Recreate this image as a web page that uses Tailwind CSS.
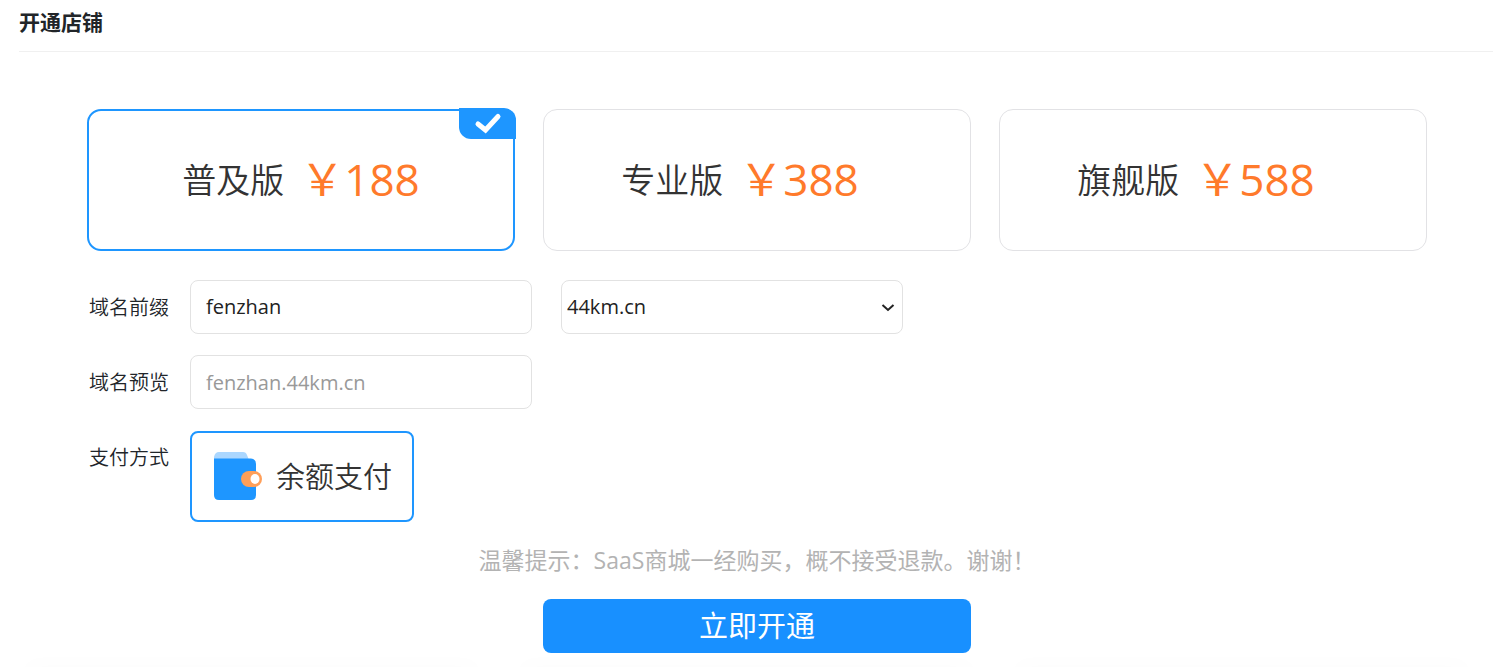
<!DOCTYPE html>
<html lang="zh-CN">

<head>
    <meta charset="UTF-8">
    <meta name="viewport" content="width=device-width, initial-scale=1.0">
    <title>开通店铺</title>
    <script src="https://cdn.jsdelivr.net/npm/@tailwindcss/browser@4"></script>
</head>

<body class="bg-white text-[#212529] font-['Open_Sans','Noto_Sans_CJK_SC',sans-serif]">
    <div class="min-h-screen flex flex-col">
        <!-- Title -->
        <header class="ml-[19px] h-[52px] flex items-center pb-2 border-b border-[#f0f0f0]">
            <h1 class="text-[21px] leading-8 font-bold">开通店铺</h1>
        </header>

        <form class="pt-[57px] pl-[87px] pr-[66px]">
            <!-- Plans -->
            <div role="radiogroup" aria-label="版本" class="grid grid-cols-3 gap-7">
                <label class="relative h-[142px] flex items-center justify-center rounded-[14px] border-2 border-[#1e96ff] text-[34px] font-[350] text-[#333]">
                    <input type="radio" name="plan" value="188" class="absolute inset-0 opacity-0" checked>
                    <span>普及版</span>
                    <span class="ml-4 pb-0.5 text-[44px] font-normal text-[#ff7a2b]">￥188</span>
                    <span class="absolute -top-[3px] -right-[3px] w-[57px] h-[31px] flex items-center justify-center bg-[#1e96ff] rounded-tr-xl rounded-bl-xl">
                        <svg class="w-7 h-6" viewBox="0 0 28 24" fill="none" stroke="#fff" stroke-width="5" stroke-linecap="round" stroke-linejoin="miter">
                            <path d="M4 12L11.500 18L24 4.500" />
                        </svg>
                    </span>
                </label>
                <label class="relative h-[142px] flex items-center justify-center pr-[34px] rounded-[14px] border border-[#e2e2e5] text-[34px] font-[350] text-[#333]">
                    <input type="radio" name="plan" value="388" class="absolute inset-0 opacity-0">
                    <span>专业版</span>
                    <span class="ml-4 pb-0.5 text-[44px] font-normal text-[#ff7a2b]">￥388</span>
                </label>
                <label class="relative h-[142px] flex items-center justify-center pr-[34px] rounded-[14px] border border-[#e2e2e5] text-[34px] font-[350] text-[#333]">
                    <input type="radio" name="plan" value="588" class="absolute inset-0 opacity-0">
                    <span>旗舰版</span>
                    <span class="ml-4 pb-0.5 text-[44px] font-normal text-[#ff7a2b]">￥588</span>
                </label>
            </div>

            <!-- Domain prefix -->
            <div class="mt-[29px] flex items-center">
                <label for="prefix" class="w-[103px] pl-0.5 pt-0.5 shrink-0 text-[20px] font-[350]">域名前缀</label>
                <input id="prefix" type="text" value="fenzhan" class="w-[342px] h-[54px] px-[15px] pb-0.5 rounded-lg border border-[#e2e2e2] text-[20px] text-[#222]">
                <div class="relative ml-[29px] w-[342px]">
                    <select aria-label="域名后缀" class="appearance-none w-full h-[54px] px-[5px] rounded-lg border border-[#e2e2e2] text-[20px] text-[#222] bg-white">
                        <option>44km.cn</option>
                    </select>
                    <svg class="absolute right-2 top-5 w-3.5 h-3.5 pointer-events-none" viewBox="0 0 14 14" fill="none" stroke="#222" stroke-width="2">
                        <path d="M1.500 5L7 10L12.500 5" />
                    </svg>
                </div>
            </div>

            <!-- Domain preview -->
            <div class="mt-[21px] flex items-center">
                <label for="preview" class="w-[103px] pl-0.5 pt-0.5 shrink-0 text-[20px] font-[350]">域名预览</label>
                <input id="preview" type="text" value="fenzhan.44km.cn" readonly class="w-[342px] h-[54px] px-[15px] rounded-lg border border-[#e2e2e2] text-[20px] text-[#999]">
            </div>

            <!-- Payment -->
            <div role="radiogroup" aria-labelledby="pay-title" class="mt-[22px] flex items-start">
                <span id="pay-title" class="w-[103px] pl-0.5 pt-[13px] shrink-0 text-[20px] leading-7 font-[350]">支付方式</span>
                <label class="relative w-[224px] h-[91px] flex items-center pl-5 pb-0.5 rounded-lg border-2 border-[#1e96ff]">
                    <input type="radio" name="pay" value="balance" class="absolute inset-0 opacity-0" checked>
                    <svg class="w-[50px] h-[50px]" viewBox="0 0 50 50">
                        <path d="M2 9V6Q3 1 7 1H31Q34 1 35 4L37 9Z" fill="#abd7ff" />
                        <path d="M2 7.500H39Q44 8 44 13V44Q44 49 39 49H7Q2 49 2 44Z" fill="#1e96ff" />
                        <rect x="29" y="20" width="21" height="16" rx="8" fill="#ff9f59" />
                        <ellipse cx="43" cy="28" rx="4.500" ry="5" fill="#fff" />
                    </svg>
                    <span class="ml-3.5 pt-0.5 text-[29px] font-[350] text-[#333]">余额支付</span>
                </label>
            </div>

            <p class="mt-5 text-center text-[23px] leading-9 text-[#b3b3b3]">温馨提示：SaaS商城一经购买，概不接受退款。谢谢！</p>

            <div class="mt-[21px] grid grid-cols-3 gap-7">
                <button type="submit" class="col-start-2 h-[54px] rounded-lg bg-[#1890ff] text-[29px] text-white">立即开通</button>
            </div>
        </form>

        <!-- Soft shade along the bottom edge -->
        <div class="mt-auto grid grid-cols-3 gap-14 px-8">
            <div class="rounded-full shadow-[0_4px_20px_6px_rgba(0,0,0,0.02)]"></div>
            <div class="rounded-full shadow-[0_4px_20px_6px_rgba(0,0,0,0.02)]"></div>
            <div class="rounded-full shadow-[0_4px_20px_6px_rgba(0,0,0,0.02)]"></div>
        </div>
    </div>
</body>

</html>
